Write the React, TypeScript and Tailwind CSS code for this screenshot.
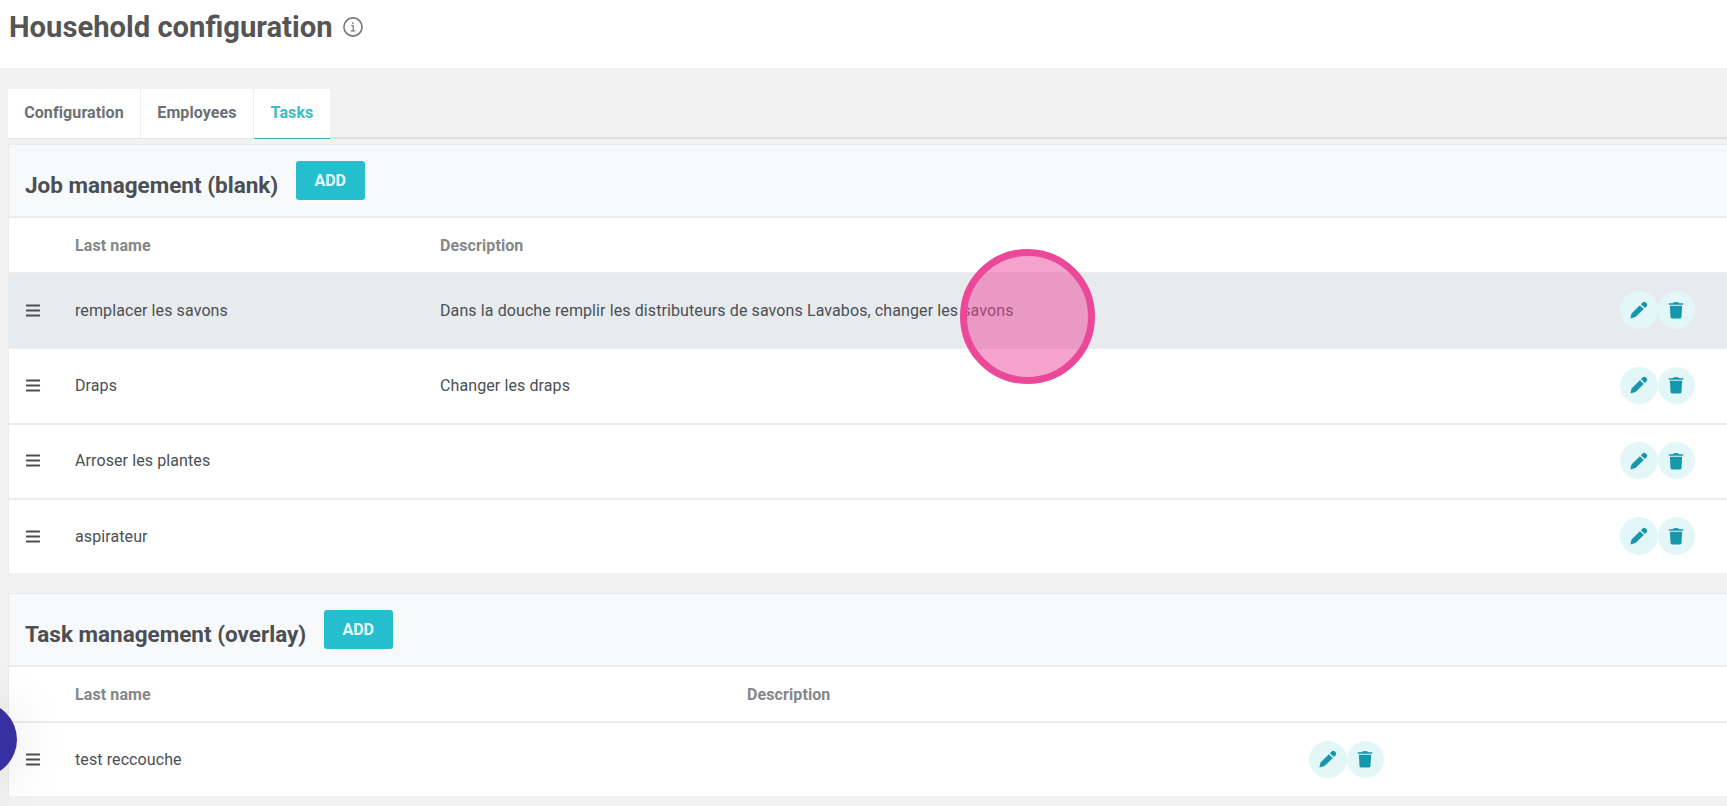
import clsx from "clsx";

interface Task {
  name: string;
  description?: string;
  highlighted?: boolean;
}

interface TaskPanelProps {
  title: string;
  tasks: Task[];
  columns: string;
}

const tabs = [
  { label: "Configuration", width: "w-[133px]" },
  { label: "Employees", width: "w-[113px]" },
  { label: "Tasks", width: "w-[76px]" },
];

const jobs: Task[] = [
  {
    name: "remplacer les savons",
    description: "Dans la douche remplir les distributeurs de savons Lavabos, changer les savons",
    highlighted: true,
  },
  { name: "Draps", description: "Changer les draps" },
  { name: "Arroser les plantes" },
  { name: "aspirateur" },
];

const overlayTasks: Task[] = [{ name: "test reccouche" }];

const InfoIcon = () => (
  <svg viewBox="0 0 20 20" className="w-5 h-5" fill="none" stroke="#777777">
    <circle cx="10" cy="10" r="9.1" strokeWidth="1.6" />
    <path d="M8.3 8.6h1.9v5M7.9 13.8h4.3" strokeWidth="1.2" />
    <circle cx="9.9" cy="6.1" r="0.9" fill="#777777" stroke="none" />
  </svg>
);

const PencilIcon = () => (
  <svg viewBox="0 0 18 18" className="w-[18px] h-[18px]" fill="#1797ab">
    <path d="M0.5 16.8 1.5 12.4 9.9 4.2 13.8 8.1 5.5 16.1 1.3 17.3Q0.4 17.6 0.5 16.8Z" />
    <path d="M10.9 3.2 12.6 1.5Q14.2 0.2 15.8 1.4L16.7 2.3Q18 3.9 16.5 5.4L14.8 7.1Z" />
  </svg>
);

const TrashIcon = () => (
  <svg viewBox="0 0 16 18" className="w-4 h-[18px]" fill="#1797ab">
    <path d="M0.8 2.2H4.4Q6 1 8 1T11.6 2.2H15.2V3.8H0.8Z" />
    <path d="M1.9 4.7H14.1L13.5 16Q13.4 17.4 12.1 17.4H3.9Q2.6 17.4 2.5 16Z" />
  </svg>
);

const DragHandle = () => (
  <svg viewBox="0 0 14 13" className="ml-[17px] mb-px h-[13px] w-3.5" fill="#4b4f54">
    <rect y="0.4" width="14" height="2" rx="0.5" />
    <rect y="5.5" width="14" height="2" rx="0.5" />
    <rect y="10.6" width="14" height="2" rx="0.5" />
  </svg>
);

const TaskPanel = ({ title, tasks, columns }: TaskPanelProps) => (
  <section className="border-l border-t border-[#e9ebed] bg-white">
    <header className="flex h-[71px] items-start bg-[#f7f9fb] pl-4">
      <h2 className="pt-[25px] text-[22.5px] leading-[30px] font-bold text-[#4b4f54] whitespace-nowrap">
        {title}
      </h2>
      <button className="mt-4 ml-[17.5px] h-[39px] w-[69px] rounded-[3px] bg-[#25becf] text-base font-bold text-[#eafcff]">
        ADD
      </button>
    </header>

    <div
      className={clsx(
        "grid h-14 items-center border-t-2 border-[#eaecee] pt-px font-bold tracking-[0.1px] text-[#85878a]",
        columns
      )}
    >
      <span />
      <span>Last name</span>
      <span>Description</span>
    </div>

    {tasks.map((task) => (
      <div
        key={task.name}
        className={clsx(
          "grid h-[75.3px] items-center border-t-2 border-[#eaecee] tracking-[0.1px] text-[#4b4f54]",
          columns,
          task.highlighted && "bg-[#e7ebee]"
        )}
      >
        <DragHandle />
        <span>{task.name}</span>
        <span className="whitespace-nowrap">{task.description}</span>
        <div className="flex pb-px">
          <button className="flex h-[37.5px] w-[37.5px] items-center justify-center rounded-full bg-[#e3f7f9]">
            <PencilIcon />
          </button>
          <button className="flex h-[37.5px] w-[37.5px] items-center justify-center rounded-full bg-[#e3f7f9]">
            <TrashIcon />
          </button>
        </div>
      </div>
    ))}
  </section>
);

export default function App() {
  return (
    <div className="relative h-[806px] w-full overflow-hidden bg-[#f2f2f2] font-['Roboto',sans-serif] text-base">
      <div className="flex h-[68px] items-start gap-2.5 bg-white pl-[9px] pt-[7px]">
        <h1 className="text-[29.2px] leading-10 font-bold text-[#555555] whitespace-nowrap">
          Household configuration
        </h1>
        <div className="pt-2.5">
          <InfoIcon />
        </div>
      </div>

      <nav className="mt-[21px] ml-2 flex h-[50px] border-b-2 border-[#dfe1e4]">
        {tabs.map(({ label, width }) => (
          <button
            key={label}
            className={clsx(
              "h-[50px] border-b bg-white pb-0.5 font-bold tracking-[0.1px] whitespace-nowrap",
              width,
              label === "Tasks"
                ? "border-[#3eacb8] text-[#3cbcc5]"
                : "border-r border-b-[#e3e5e8] border-r-[#eeeff0] text-[#6c7075]"
            )}
          >
            {label}
          </button>
        ))}
      </nav>

      <main className="mt-[5px] ml-2 flex flex-col gap-5">
        <TaskPanel
          title="Job management (blank)"
          tasks={jobs}
          columns="grid-cols-[66px_365px_1180px_1fr]"
        />
        <TaskPanel
          title="Task management (overlay)"
          tasks={overlayTasks}
          columns="grid-cols-[66px_672px_562px_1fr]"
        />
      </main>

      {/* click marker */}
      <div className="absolute left-[960px] top-[249px] h-[135px] w-[135px] rounded-full border-[7px] border-[#ec4899] bg-[#ec4899]/50" />

      {/* help bubble, partly off screen */}
      <div className="absolute -left-[58px] top-[702px] h-[75px] w-[75px] rounded-full bg-[#3730a3] shadow-[0_4px_60px_rgba(0,0,0,0.1)]" />
    </div>
  );
}
